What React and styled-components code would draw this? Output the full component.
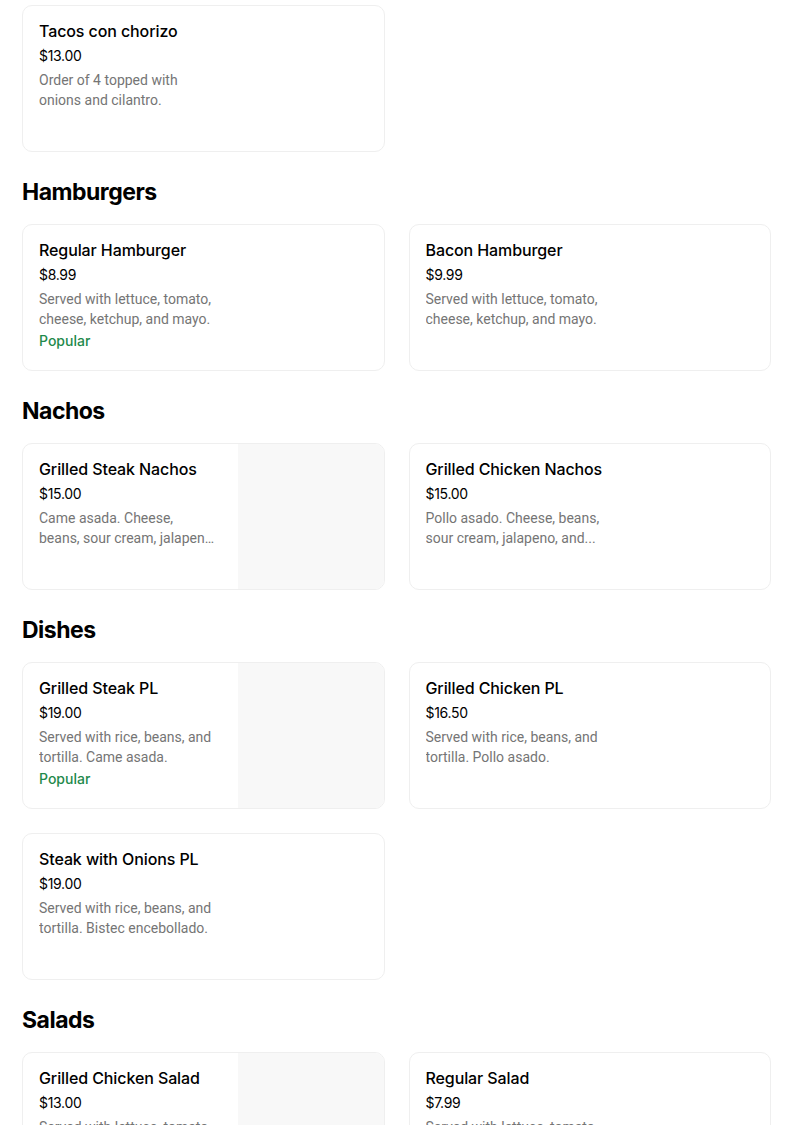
import React from 'react';
import styled, { createGlobalStyle } from 'styled-components';

const GlobalStyle = createGlobalStyle`
  body {
    margin: 0;
    background: #ffffff;
    font-family: Inter, "Noto Sans", sans-serif;
    color: #000000;
  }
`;

const Page = styled.div`
  padding: 5px 33px 40px 22px;
`;

const Section = styled.section`
  & + & {
    margin-top: 24px;
  }
`;

const SectionTitle = styled.h2`
  margin: 0 0 16px;
  font-size: 23px;
  line-height: 32px;
  font-weight: 700;
  letter-spacing: -0.5px;
`;

const Grid = styled.div`
  display: grid;
  grid-template-columns: 1fr 1fr;
  gap: 24px;
`;

const Card = styled.div`
  display: flex;
  height: 147px;
  box-sizing: border-box;
  border: 1px solid #efefef;
  border-radius: 10px;
  overflow: hidden;
  background: #ffffff;
`;

const Info = styled.div`
  width: 215px;
  box-sizing: border-box;
  padding: 13px 16px 0 16px;
  flex-shrink: 0;
`;

const Name = styled.div`
  font-size: 16px;
  line-height: 24px;
  font-weight: 500;
  letter-spacing: -0.1px;
  white-space: nowrap;
`;

const Price = styled.div`
  margin-top: 3px;
  font-size: 14px;
  line-height: 20px;
  letter-spacing: -0.3px;
`;

const Desc = styled.div`
  margin-top: 4px;
  font-family: Roboto, "Noto Sans", sans-serif;
  font-size: 14px;
  line-height: 20px;
  color: #757575;
`;

const Line = styled.div`
  white-space: nowrap;
  overflow: hidden;
  text-overflow: ellipsis;
`;

const Tag = styled.div`
  margin-top: 2px;
  font-size: 14px;
  line-height: 20px;
  font-weight: 500;
  color: #1f8a4c;
`;

const Photo = styled.div`
  flex: 1;
  background: #f8f8f8;
`;

const sections = [
  {
    title: null,
    items: [
      { name: 'Tacos con chorizo', price: '$13.00', desc: ['Order of 4 topped with', 'onions and cilantro.'] },
    ],
  },
  {
    title: 'Hamburgers',
    items: [
      { name: 'Regular Hamburger', price: '$8.99', desc: ['Served with lettuce, tomato,', 'cheese, ketchup, and mayo.'], popular: true },
      { name: 'Bacon Hamburger', price: '$9.99', desc: ['Served with lettuce, tomato,', 'cheese, ketchup, and mayo.'] },
    ],
  },
  {
    title: 'Nachos',
    items: [
      { name: 'Grilled Steak Nachos', price: '$15.00', desc: ['Came asada. Cheese,', 'beans, sour cream, jalapeno, and guacamole.'], photo: true },
      { name: 'Grilled Chicken Nachos', price: '$15.00', desc: ['Pollo asado. Cheese, beans,', 'sour cream, jalapeno, and...'] },
    ],
  },
  {
    title: 'Dishes',
    items: [
      { name: 'Grilled Steak PL', price: '$19.00', desc: ['Served with rice, beans, and', 'tortilla. Came asada.'], popular: true, photo: true },
      { name: 'Grilled Chicken PL', price: '$16.50', desc: ['Served with rice, beans, and', 'tortilla. Pollo asado.'] },
      { name: 'Steak with Onions PL', price: '$19.00', desc: ['Served with rice, beans, and', 'tortilla. Bistec encebollado.'] },
    ],
  },
  {
    title: 'Salads',
    items: [
      { name: 'Grilled Chicken Salad', price: '$13.00', desc: ['Served with lettuce, tomato,', 'cheese, and grilled chicken.'], photo: true },
      { name: 'Regular Salad', price: '$7.99', desc: ['Served with lettuce, tomato,', 'cheese, and dressing.'] },
    ],
  },
];

function MenuCard({ item }) {
  return (
    <Card>
      <Info>
        <Name>{item.name}</Name>
        <Price>{item.price}</Price>
        <Desc>
          {item.desc.map((l) => (
            <Line key={l}>{l}</Line>
          ))}
        </Desc>
        {item.popular && <Tag>Popular</Tag>}
      </Info>
      {item.photo && <Photo />}
    </Card>
  );
}

export default function App() {
  return (
    <>
      <GlobalStyle />
      <Page>
        {sections.map((s, i) => (
          <Section key={i}>
            {s.title && <SectionTitle>{s.title}</SectionTitle>}
            <Grid>
              {s.items.map((it) => (
                <MenuCard key={it.name} item={it} />
              ))}
            </Grid>
          </Section>
        ))}
      </Page>
    </>
  );
}
